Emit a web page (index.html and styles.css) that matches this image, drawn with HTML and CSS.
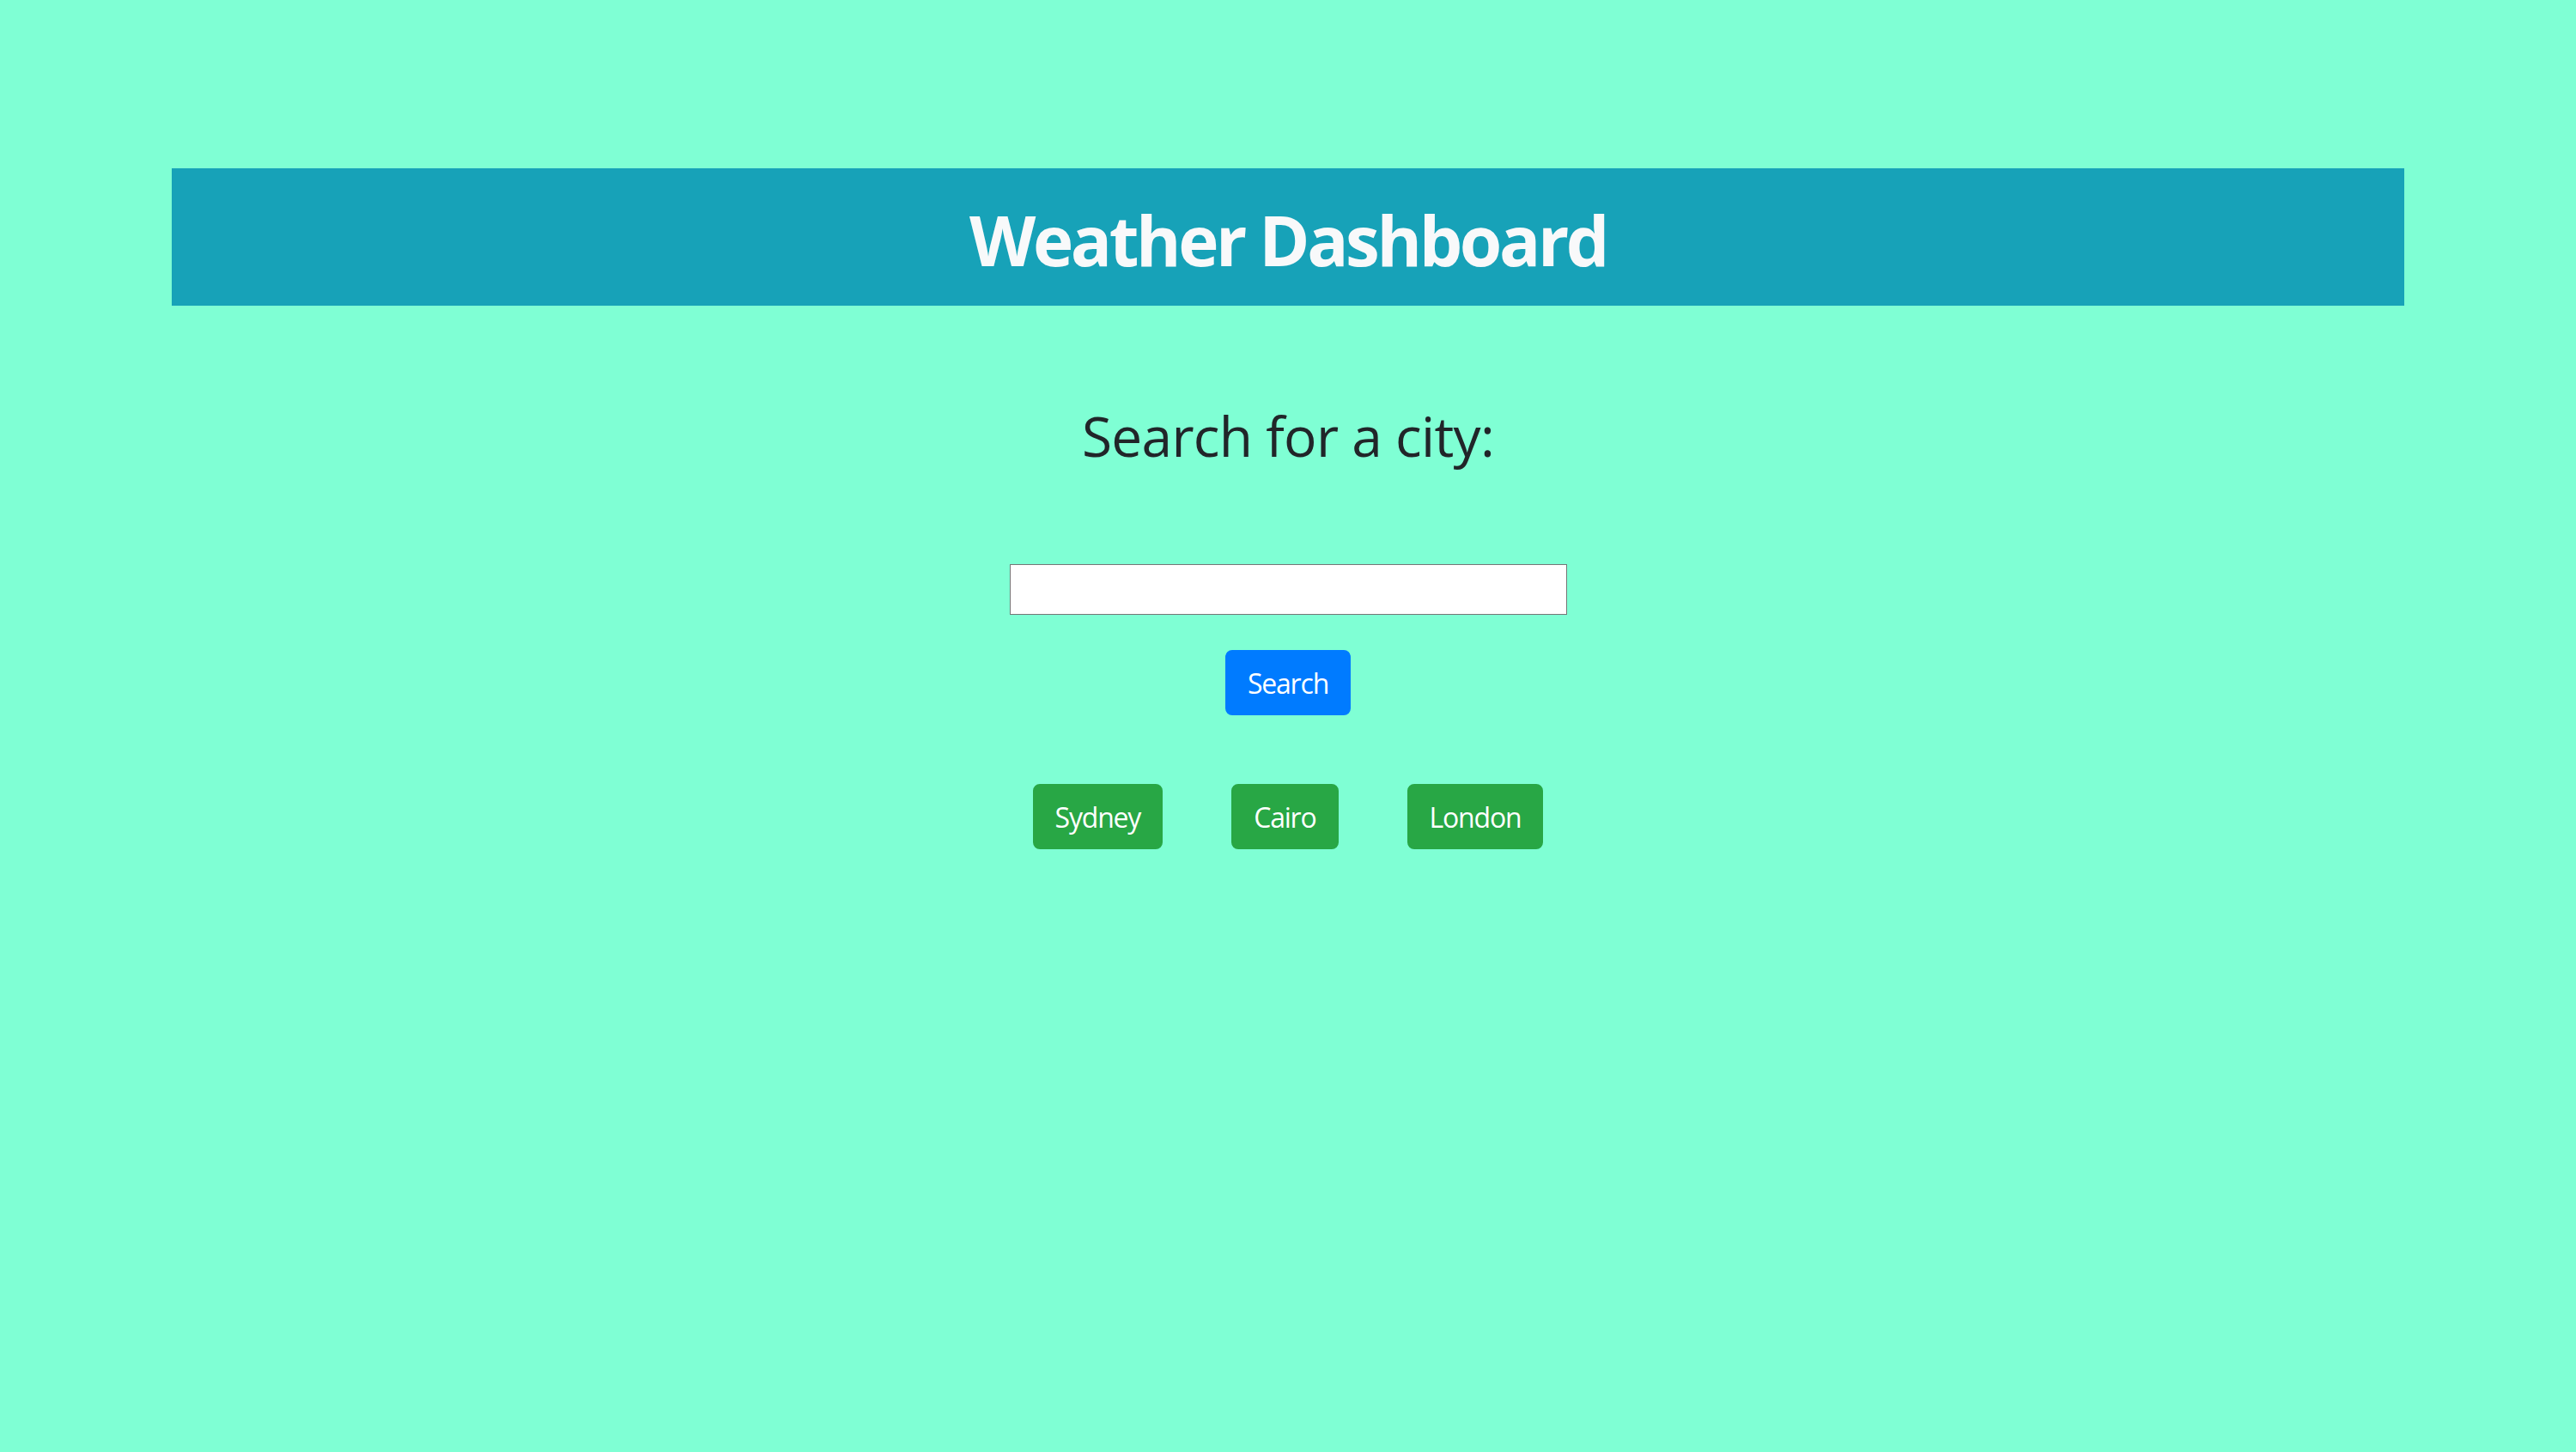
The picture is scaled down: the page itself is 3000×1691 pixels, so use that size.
FILE: index.html
```html
<!DOCTYPE html>
<html lang="en">
<head>
<meta charset="utf-8">
<title>Weather Dashboard</title>
<link rel="stylesheet" href="styles.css">
</head>
<body>
<header class="banner">
  <h1 class="banner-title">Weather Dashboard</h1>
</header>
<main class="search-area">
  <h2 class="search-heading">Search for a city:</h2>
  <input class="city-input" type="text" aria-label="City">
  <button class="btn btn-primary" type="button">Search</button>
  <div class="history">
    <button class="btn btn-success" type="button">Sydney</button>
    <button class="btn btn-success" type="button">Cairo</button>
    <button class="btn btn-success" type="button">London</button>
  </div>
</main>
</body>
</html>
```

FILE: styles.css
```css
html, body {
  margin: 0;
  padding: 0;
}

body {
  background: #7fffd4;
  font-family: "Open Sans", "Liberation Sans", sans-serif;
  color: #212529;
  min-height: 1691px;
}

.banner {
  margin: 196px 200px 0;
  background: #17a2b8;
  padding: 35px 0 29px;
}

.banner-title {
  margin: 0;
  font-size: 80px;
  line-height: 96px;
  font-weight: 700;
  color: #f8f9fa;
  text-align: center;
  letter-spacing: -3.4px;
}

.search-area {
  display: flex;
  flex-direction: column;
  align-items: center;
}

.search-heading {
  margin: 114px 0 0;
  font-size: 64px;
  line-height: 1.2;
  font-weight: 400;
  letter-spacing: -0.7px;
}

.city-input {
  box-sizing: border-box;
  margin-top: 110px;
  width: 649px;
  height: 59px;
  border: 1px solid #767676;
  background: #fff;
  padding: 2px 4px;
  font-size: 28px;
  font-family: inherit;
}

.btn {
  box-sizing: border-box;
  font-family: inherit;
  font-size: 32px;
  line-height: 48px;
  padding: 13px 24px 11px;
  border: 2px solid transparent;
  border-radius: 8px;
  color: #fff;
  letter-spacing: -1.2px;
  cursor: pointer;
}

.btn-primary {
  margin-top: 41px;
  background: #007bff;
  border-color: #007bff;
}

.btn-success {
  background: #28a745;
  border-color: #28a745;
}

.history {
  margin-top: 80px;
  display: flex;
  gap: 80px;
  justify-content: center;
}
```
